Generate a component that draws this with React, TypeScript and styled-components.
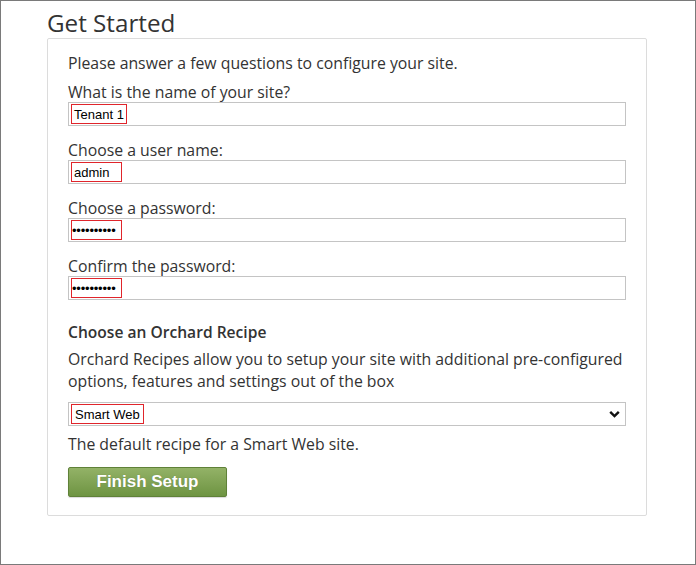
import styled, { createGlobalStyle } from "styled-components";

const GlobalStyle = createGlobalStyle`
  html, body {
    margin: 0;
    padding: 0;
    background: #fff;
  }
  body {
    font-family: "Open Sans", "Liberation Sans", sans-serif;
    color: #333;
  }
`;

const Frame = styled.div`
  width: 696px;
  height: 565px;
  box-sizing: border-box;
  border: 1px solid #7a7a7a;
  padding: 0 0 0 46px;
  overflow: hidden;
`;

const Title = styled.h1`
  margin: 0;
  height: 37px;
  font-size: 24.2px;
  line-height: 44px;
  font-weight: 400;
  color: #333;
`;

const Panel = styled.div`
  width: 600px;
  height: 478px;
  box-sizing: border-box;
  border: 1px solid #dcdcdc;
  border-radius: 2px;
  padding: 13px 20px 17px;
  display: flex;
  flex-direction: column;
`;

const Text = styled.p<{ $gap?: number }>`
  margin: ${(p) => p.$gap ?? 0}px 0 0;
  font-size: 15.8px;
  line-height: 22px;
  color: #333;
`;

const SectionTitle = styled.h2`
  margin: 21px 0 0;
  font-size: 15.6px;
  line-height: 22px;
  font-weight: 600;
  color: #333;
`;

const Field = styled.div`
  margin-top: 8px;
  & + & {
    margin-top: 14px;
  }
`;

const Label = styled.label`
  display: block;
  font-size: 15.8px;
  line-height: 20px;
  color: #333;
`;

const Box = styled.div<{ $gap?: number }>`
  box-sizing: border-box;
  margin-top: ${(p) => p.$gap ?? 0}px;
  height: 24px;
  border: 1px solid #c4c4c4;
  display: flex;
  align-items: center;
  padding: 0 2px;
  background: #fff;
`;

const Value = styled.span<{ $secret?: boolean }>`
  box-sizing: border-box;
  min-width: 51px;
  height: 20px;
  display: inline-flex;
  align-items: center;
  border: 1px solid #e0252b;
  padding: 0 ${(p) => (p.$secret ? "0" : "2px")};
  font-family: "Liberation Sans", Arial, sans-serif;
  font-size: 13px;
  letter-spacing: ${(p) => (p.$secret ? "-0.2px" : "0")};
  color: #000;
`;

const Select = styled(Box)`
  justify-content: space-between;
  padding-right: 5px;
`;

const SelectValue = styled(Value)`
  padding: 0 3px;
`;

const Button = styled.button`
  margin-top: 12px;
  align-self: flex-start;
  width: 159px;
  height: 30px;
  border: 1px solid #5f8138;
  border-radius: 2px;
  background: linear-gradient(#93b267, #6e9442);
  color: #fff;
  font-family: "Liberation Sans", Arial, sans-serif;
  font-weight: 700;
  font-size: 17px;
  text-shadow: 0 0 1px rgba(0, 0, 0, 0.25);
  box-shadow: 0 1px 1px rgba(0, 0, 0, 0.15);
  padding: 0;
  cursor: pointer;
`;

const fields = [
  { label: "What is the name of your site?", value: "Tenant 1" },
  { label: "Choose a user name:", value: "admin" },
  { label: "Choose a password:", value: "••••••••••", secret: true },
  { label: "Confirm the password:", value: "••••••••••", secret: true },
];

function Chevron() {
  return (
    <svg width="11" height="8" viewBox="0 0 11 8">
      <polyline
        points="1.2,1.8 5.5,6 9.8,1.8"
        fill="none"
        stroke="#111"
        strokeWidth="2.4"
      />
    </svg>
  );
}

export default function App() {
  return (
    <>
      <GlobalStyle />
      <Frame>
        <Title>Get Started</Title>
        <Panel>
          <Text>Please answer a few questions to configure your site.</Text>
          {fields.map((f) => (
            <Field key={f.label}>
              <Label>{f.label}</Label>
              <Box>
                <Value $secret={f.secret}>{f.value}</Value>
              </Box>
            </Field>
          ))}
          <SectionTitle>Choose an Orchard Recipe</SectionTitle>
          <Text $gap={5}>
            Orchard Recipes allow you to setup your site with additional
            pre-configured options, features and settings out of the box
          </Text>
          <Select $gap={10}>
            <SelectValue>Smart Web</SelectValue>
            <Chevron />
          </Select>
          <Text $gap={7}>The default recipe for a Smart Web site.</Text>
          <Button>Finish Setup</Button>
        </Panel>
      </Frame>
    </>
  );
}
